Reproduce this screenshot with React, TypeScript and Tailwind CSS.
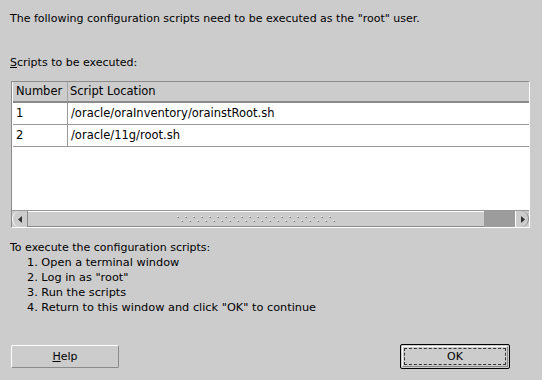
import React from "react";

function Grip() {
  const dots: React.ReactElement[] = [];
  for (let i = 0; i < 20; i++) {
    const x = i * 8;
    dots.push(<rect key={"a" + i} x={x} y={0} width={1} height={1} fill="#ffffff" />);
    dots.push(<rect key={"b" + i} x={x + 1} y={1} width={1} height={1} fill="#7a7a7a" />);
    dots.push(<rect key={"b2" + i} x={x} y={1} width={1} height={1} fill="#a8a8a8" />);
    dots.push(<rect key={"c" + i} x={x + 4} y={4} width={1} height={1} fill="#ffffff" />);
    dots.push(<rect key={"d" + i} x={x + 5} y={5} width={1} height={1} fill="#7a7a7a" />);
    dots.push(<rect key={"d2" + i} x={x + 4} y={5} width={1} height={1} fill="#a8a8a8" />);
  }
  return (
    <svg width="158" height="6" viewBox="0 0 158 6" className="block">
      {dots}
    </svg>
  );
}

export default function App() {
  return (
    <div className="w-[542px] h-[380px] bg-[#cccccc] text-black text-[11px] leading-[15px] font-['DejaVu_Sans',sans-serif] flex flex-col">
      <div className="pt-[11px] pl-[10px]">
        The following configuration scripts need to be executed as the "root" user.
      </div>
      <div className="mt-[29px] pl-[10px]">
        <span className="underline">S</span>cripts to be executed:
      </div>

      <div className="mt-[11px] ml-[11px] w-[519px] h-[147px] border border-t-[#8c8c8c] border-l-[#8c8c8c] border-r-[#ffffff] border-b-[#ffffff] flex flex-col">
        <div className="flex-1 flex flex-col border-l border-l-[#ffffff] bg-white text-[11.5px]">
          <div className="h-[21px] flex bg-[#cccccc] border-b-2 border-b-[#8a8a8a]">
            <div className="w-[55px] pl-[3px] flex items-center border-r border-r-[#a6a6a6]">Number</div>
            <div className="flex-1 pl-[2px] flex items-center">Script Location</div>
          </div>
          <div className="h-[22px] flex border-b border-b-[#999999]">
            <div className="w-[55px] pl-[3px] flex items-center border-r border-r-[#999999]">1</div>
            <div className="flex-1 pl-[3px] flex items-center">/oracle/oraInventory/orainstRoot.sh</div>
          </div>
          <div className="h-[22px] flex border-b border-b-[#999999]">
            <div className="w-[55px] pl-[3px] flex items-center border-r border-r-[#999999]">2</div>
            <div className="flex-1 pl-[3px] flex items-center">/oracle/11g/root.sh</div>
          </div>
          <div className="flex-1" />
        </div>
        <div className="h-[17px] flex bg-[#cccccc] border-t border-t-[#999999]">
          <div className="w-[16px] h-full flex items-center justify-center border-l border-l-[#ffffff] border-r border-r-[#8a8a8a] rounded-l-[8px] bg-[#cccccc]">
            <svg width="5" height="7" viewBox="0 0 5 7"><path d="M4 0 L0 3.5 L4 7 Z" fill="#333" /></svg>
          </div>
          <div className="w-[456px] h-full flex items-center justify-center border-b border-b-[#8a8a8a] border-t border-t-[#ffffff] bg-[#cccccc]">
            <Grip />
          </div>
          <div className="flex-1 bg-[#9c9c9c]" />
          <div className="w-[14px] h-full flex items-center justify-center border-l border-l-[#ffffff] rounded-r-[8px] border-r border-r-[#8a8a8a] bg-[#cccccc]">
            <svg width="5" height="7" viewBox="0 0 5 7"><path d="M1 0 L5 3.5 L1 7 Z" fill="#333" /></svg>
          </div>
        </div>
      </div>

      <div className="mt-[12px] pl-[10px]">
        <div>To execute the configuration scripts:</div>
        <div className="pl-[17px] text-[11.3px]">
          <div>1. Open a terminal window</div>
          <div>2. Log in as "root"</div>
          <div>3. Run the scripts</div>
          <div>4. Return to this window and click "OK" to continue</div>
        </div>
      </div>

      <div className="mt-[29px] flex items-start">
        <button className="ml-[11px] mt-[1px] w-[108px] h-[23px] rounded-[2px] bg-[#cccccc] border border-t-[#ffffff] border-l-[#ffffff] border-r-[#8a8a8a] border-b-[#8a8a8a] flex items-center justify-center text-[11px]">
          <span><span className="underline">H</span>elp</span>
        </button>
        <div className="flex-1" />
        <button className="mr-[32px] w-[110px] h-[25px] rounded-[2px] bg-[#cccccc] border border-black p-[1px] flex">
          <div className="flex-1 border-t border-l border-t-white border-l-white border-b border-r border-b-[#8a8a8a] border-r-[#8a8a8a] p-[1px] flex">
            <div className="flex-1 border border-dashed border-[#333333] flex items-center justify-center text-[11px]">OK</div>
          </div>
        </button>
      </div>
    </div>
  );
}
